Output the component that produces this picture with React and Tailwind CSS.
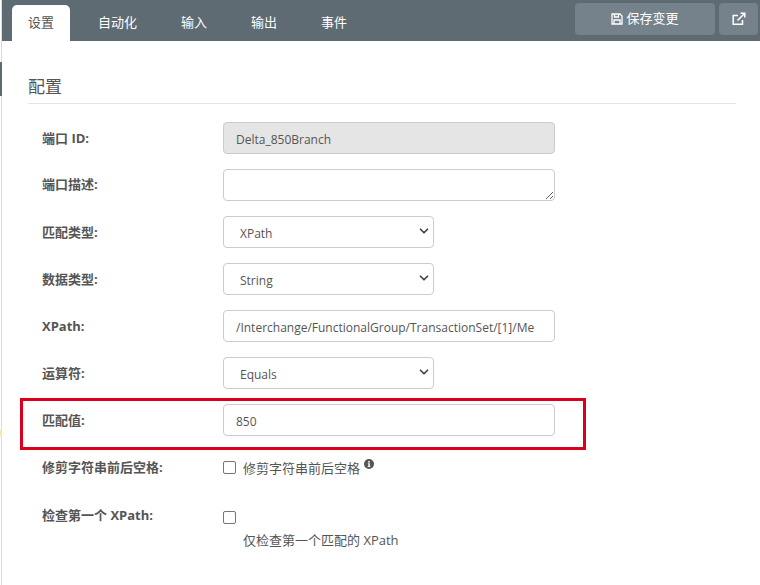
import { ChevronDown } from "lucide-react";

const cjk = "font-['Open_Sans','Noto_Sans_CJK_SC',sans-serif]";

function Row({ label, children, className = "", labelClass = "pt-[6px]" }) {
    return (
        <div className={`flex ${className}`}>
            <label className={`w-[195px] pl-[14px] text-[13px] leading-[20px] font-bold text-[#555] ${labelClass}`}>{label}</label>
            {children}
        </div>
    );
}

function Select({ value }) {
    return (
        <div className="relative w-[211px] h-[32px]">
            <select
                defaultValue={value}
                className="w-full h-full appearance-none rounded-[4px] border border-[#ccc] bg-white pl-[16px] pt-[3px] text-[12px] text-[#555] outline-none"
            >
                <option>{value}</option>
            </select>
            <ChevronDown size={14} strokeWidth={3} className="absolute right-[3px] top-[8px] text-[#444] pointer-events-none" />
        </div>
    );
}

const inputCls = "w-[332px] h-[32px] rounded-[4px] border border-[#ccc] pl-[12px] pr-[2px] pt-[2px] text-[12px] text-[#555] outline-none";

export default function App() {
    return (
        <div className={`relative w-[760px] h-[585px] overflow-hidden bg-white ${cjk}`}>
            <header className="flex justify-between h-[41px] ml-[2px] bg-[#5f6b73]">
                <nav className="flex items-end pl-[10px] text-[13px] text-white">
                    <a className="w-[58px] h-[36px] flex items-center justify-center rounded-t-[5px] bg-white text-[#555]">设置</a>
                    <a className="w-[86px] pl-[28px] h-[36px] flex items-center">自动化</a>
                    <a className="w-[70px] pl-[25px] h-[36px] flex items-center">输入</a>
                    <a className="w-[70px] pl-[25px] h-[36px] flex items-center">输出</a>
                    <a className="w-[70px] pl-[25px] h-[36px] flex items-center">事件</a>
                </nav>
                <div className="flex gap-[4px] pt-[3px] pr-[2px]">
                    <button className="w-[140px] h-[32px] flex items-center justify-center gap-[3px] rounded-[4px] bg-[#75818b] text-[13px] text-white">
                        <svg width="12" height="12" viewBox="0 0 12 12" fill="none" stroke="currentColor" strokeWidth="1.3">
                            <path d="M1 1h8l2 2v8H1z" />
                            <path d="M3.5 1v3h4V1M3 11V7h6v4" />
                        </svg>
                        保存变更
                    </button>
                    <button className="w-[39px] h-[32px] flex items-center justify-center rounded-[4px] bg-[#75818b] text-white">
                        <svg width="14" height="14" viewBox="0 0 14 14" fill="none" stroke="currentColor" strokeWidth="1.5">
                            <path d="M10.5 8v4.2H1.2V3.5H6" />
                            <path d="M5.5 8.5 12 2M8.5 1.2h4.3v4.3" />
                        </svg>
                    </button>
                </div>
            </header>

            {/* edge of the page behind the panel */}
            <div className="absolute left-[1px] top-0 w-[1px] h-full bg-[#dcdcdc]" />
            <div className="absolute left-0 top-[62px] w-[2px] h-[34px] bg-[#5f6b73]" />
            <div className="absolute left-0 top-[430px] w-[2px] h-[7px] bg-[#fbe7a8]" />

            <main className="pl-[28px] pr-[24px]">
                <h2 className="mt-[34px] pb-[4px] h-[29px] border-b border-[#e5e5e5] text-[17px] leading-[24px] font-normal text-[#555]">配置</h2>
                <div className="flex flex-col gap-[15px] pt-[18px]">
                    <Row label="端口 ID:">
                        <input readOnly value="Delta_850Branch" className={`${inputCls} bg-[#e5e5e5]`} />
                    </Row>
                    <Row label="端口描述:" labelClass="pt-[5px]">
                        <textarea readOnly className="w-[332px] h-[32px] block rounded-[4px] border border-[#ccc] outline-none" />
                    </Row>
                    <Row label="匹配类型:"><Select value="XPath" /></Row>
                    <Row label="数据类型:"><Select value="String" /></Row>
                    <Row label="XPath:">
                        <input readOnly value="/Interchange/FunctionalGroup/TransactionSet/[1]/Me" className={inputCls} />
                    </Row>
                    <Row label="运算符:"><Select value="Equals" /></Row>
                    <Row label="匹配值:">
                        <input readOnly value="850" className={inputCls} />
                    </Row>
                    <Row label="修剪字符串前后空格:" className="h-[32px]">
                        <div className="flex items-start pt-[9px]">
                            <input type="checkbox" className="w-[13px] h-[13px] mt-[1px] appearance-none rounded-[2px] border border-[#767676] bg-white" />
                            <span className="ml-[7px] -mt-[1px] text-[13px] leading-[18px] text-[#555]">修剪字符串前后空格</span>
                            <svg width="10" height="10" viewBox="0 0 10 10" className="ml-[4px] -mt-[1px]">
                                <circle cx="5" cy="5" r="5" fill="#555" />
                                <path d="M4.2 2h1.6v1.4H4.2zM3.8 4.2h2v3h.6v.9H3.6v-.9h.7V5h-.5z" fill="#fff" />
                            </svg>
                        </div>
                    </Row>
                    <Row label="检查第一个 XPath:" className="mt-[1px]">
                        <div className="pt-[12px]">
                            <input type="checkbox" className="block w-[13px] h-[13px] appearance-none rounded-[2px] border border-[#767676] bg-white" />
                            <p className="mt-[7px] ml-[20px] text-[13px] leading-[18px] text-[#555]">仅检查第一个匹配的 XPath</p>
                        </div>
                    </Row>
                </div>
            </main>

            {/* annotation drawn over the screenshot */}
            <div className="absolute left-[20px] top-[398px] w-[566px] h-[52px] border-[3px] border-[#d9001b] pointer-events-none" />
        </div>
    );
}
